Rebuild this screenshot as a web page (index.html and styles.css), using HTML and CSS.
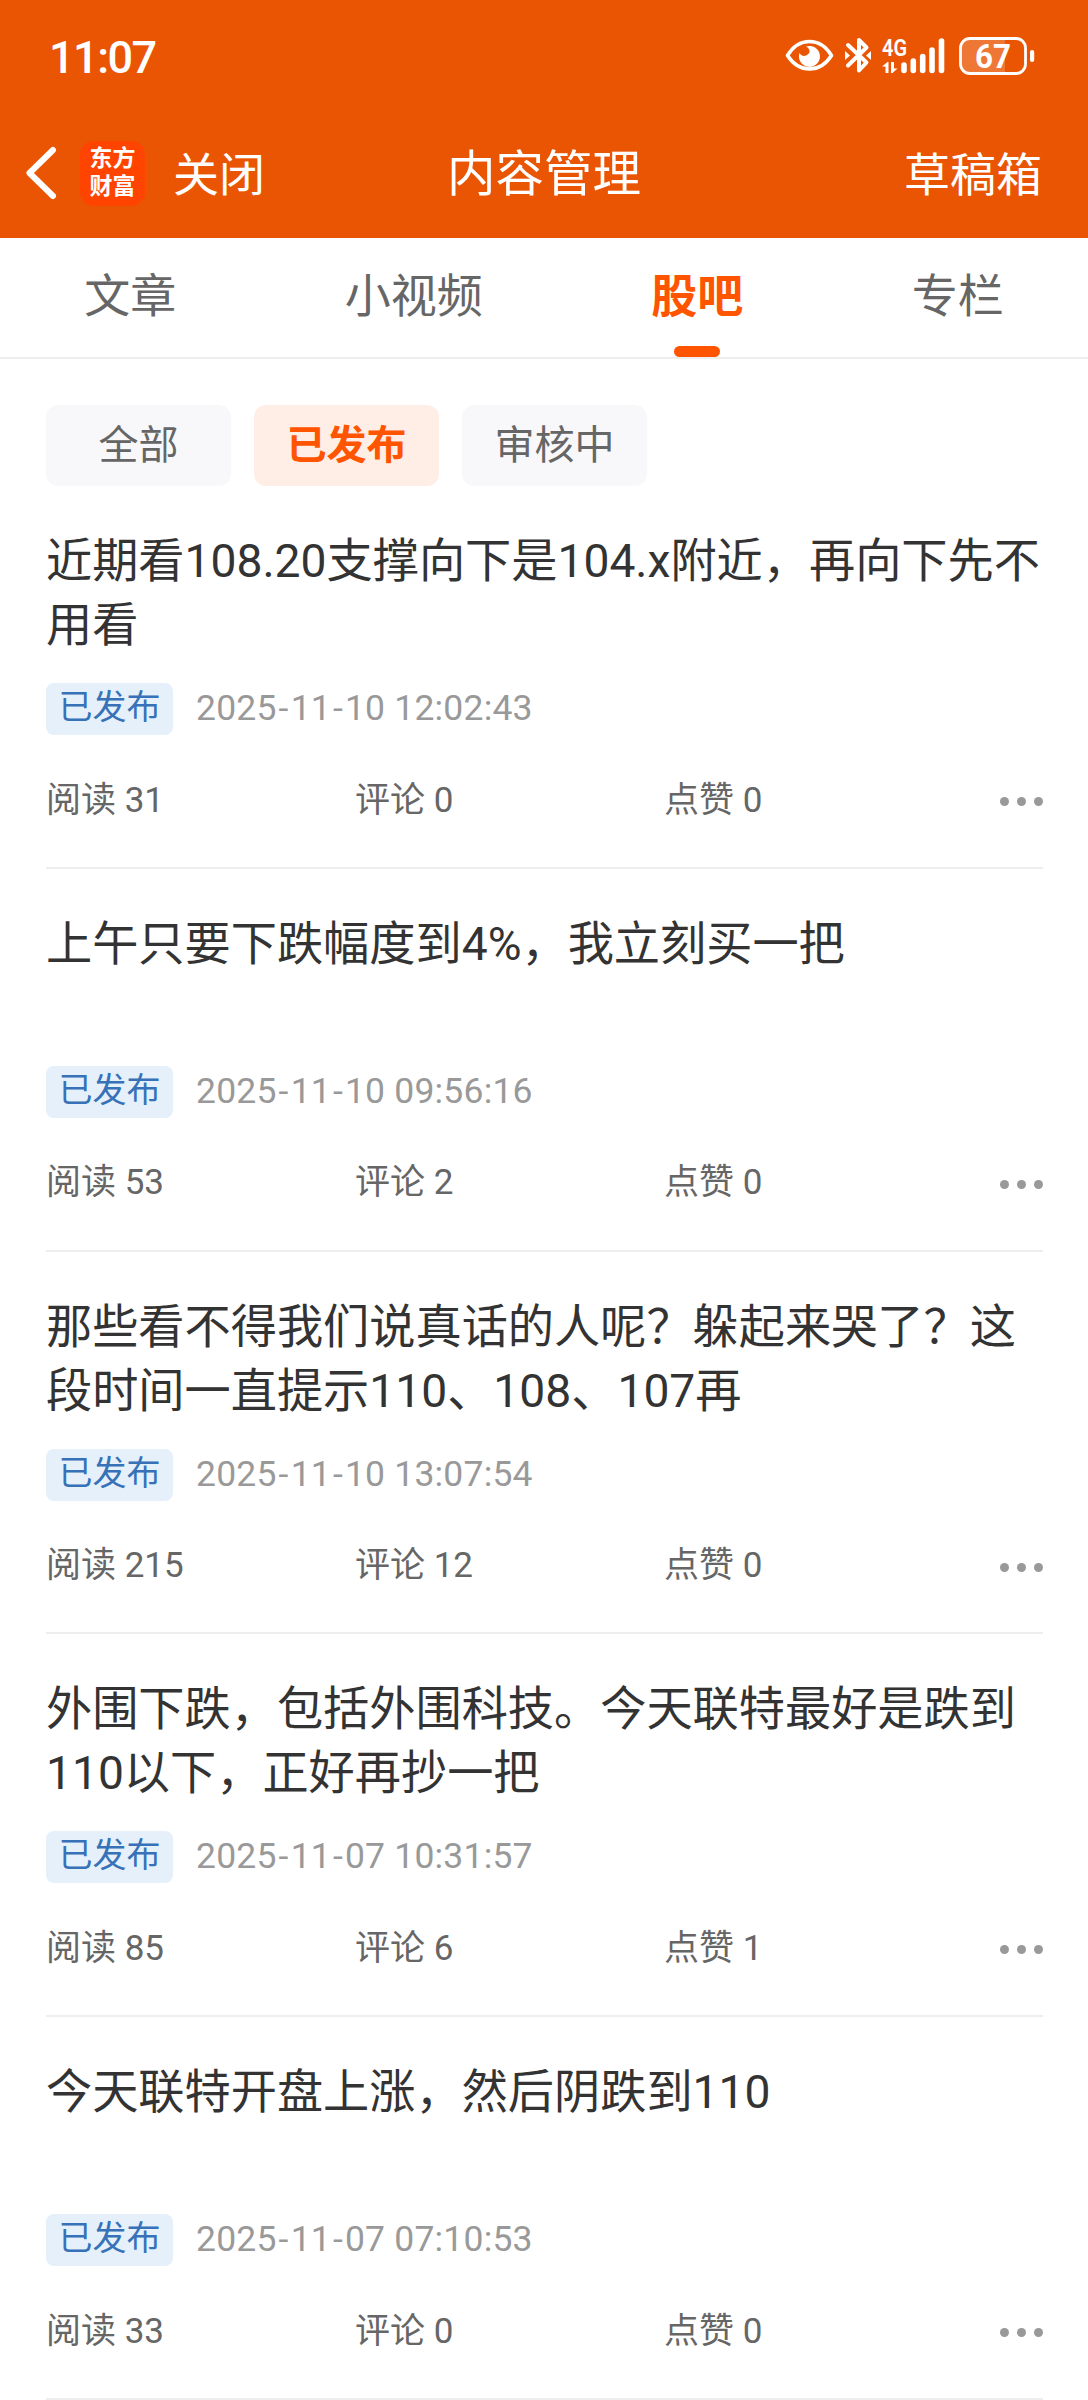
FILE: index.html
```html
<!DOCTYPE html>
<html lang="zh-CN">
<head>
    <meta charset="UTF-8">
    <meta name="viewport" content="width=device-width, initial-scale=1.0">
    <title>内容管理</title>
    <link rel="stylesheet" href="styles.css">
</head>
<body>
    <div class="top">
        <div class="status-bar">
            <span class="clock">11:07</span>
            <svg class="status-icons" width="252" height="42" viewBox="0 0 252 42">
                <!-- eye comfort -->
                <path d="M2.5 20.5C8 11.5 15.5 6.5 24.5 6.5S41 11.5 46.5 20.5C41 29 33.5 34 24.5 34S8 29 2.5 20.5Z" fill="none" stroke="#fff" stroke-width="3.6" stroke-linejoin="round"/>
                <path d="M21 11.5A10.5 10.5 0 1 1 14.5 18C16 20.5 18.5 21.5 21 20.5C25.5 19 26 14 21 11.5Z" fill="#fff"/>
                <!-- bluetooth -->
                <path d="M63 10L81.5 27.5L74 35.500V5L81.5 12.5L63 30.5" fill="none" stroke="#fff" stroke-width="4" stroke-linecap="round" stroke-linejoin="round"/>
                <path d="M60 16L65 20.5L60 25ZM86 16L81 20.5L86 25Z" fill="#fff"/>
                <!-- mobile signal -->
                <text class="net" x="97" y="21" textLength="25" lengthAdjust="spacingAndGlyphs">4G</text>
                <path d="M97 31.5L102.5 27H103.5V38H100.5V31.5ZM106 27H109V33.5H112.5L107.5 38H106Z" fill="#fff"/>
                <path d="M119 30V35.5M128.3 26V35.5M137.7 21.5V35.5M147 15V35.5M156.5 6V35.5" stroke="#fff" stroke-width="5.6" stroke-linecap="round"/>
                <!-- battery -->
                <path d="M220 3H184A10 10 0 0 0 175 12V29A10 10 0 0 0 184 38H220Z" fill="#fff" fill-opacity="0.2"/>
                <rect x="175.5" y="3.5" width="65" height="35" rx="9.5" fill="none" stroke="#fff" stroke-width="2.8"/>
                <rect x="245" y="15" width="4.2" height="12" rx="2.1" fill="#fff"/>
                <text class="level" x="190" y="33" textLength="36" lengthAdjust="spacingAndGlyphs">67</text>
            </svg>
        </div>
        <div class="nav">
            <div class="nav-left">
                <svg class="back" width="32" height="54" viewBox="0 0 32 54">
                    <path d="M28 4L4.5 27L28 50" fill="none" stroke="#fff" stroke-width="6" stroke-linecap="round" stroke-linejoin="round"/>
                </svg>
                <div class="logo"><span>东方</span><span>财富</span></div>
                <span class="close">关闭</span>
            </div>
            <h1>内容管理</h1>
            <span class="drafts">草稿箱</span>
        </div>
    </div>

    <div class="tabs">
        <div class="tab">文章</div>
        <div class="tab">小视频</div>
        <div class="tab active">股吧</div>
        <div class="tab">专栏</div>
    </div>

    <div class="filters">
        <div class="filter">全部</div>
        <div class="filter active">已发布</div>
        <div class="filter">审核中</div>
    </div>

    <div class="list">
        <div class="post">
            <div class="post-title">近期看108.20支撑向下是104.x附近，再向下先不用看</div>
            <div class="post-meta"><span class="badge">已发布</span><span class="date">2025<i>-</i>11<i>-</i>10 12:02:43</span></div>
            <div class="post-stats">
                <span>阅读 31</span><span>评论 0</span><span>点赞 0</span>
                <div class="more"><b></b><b></b><b></b></div>
            </div>
        </div>
        <div class="post">
            <div class="post-title">上午只要下跌幅度到4%，我立刻买一把</div>
            <div class="post-meta"><span class="badge">已发布</span><span class="date">2025<i>-</i>11<i>-</i>10 09:56:16</span></div>
            <div class="post-stats">
                <span>阅读 53</span><span>评论 2</span><span>点赞 0</span>
                <div class="more"><b></b><b></b><b></b></div>
            </div>
        </div>
        <div class="post">
            <div class="post-title">那些看不得我们说真话的人呢？躲起来哭了？这段时间一直提示110、108、107再</div>
            <div class="post-meta"><span class="badge">已发布</span><span class="date">2025<i>-</i>11<i>-</i>10 13:07:54</span></div>
            <div class="post-stats">
                <span>阅读 215</span><span>评论 12</span><span>点赞 0</span>
                <div class="more"><b></b><b></b><b></b></div>
            </div>
        </div>
        <div class="post">
            <div class="post-title">外围下跌，包括外围科技。今天联特最好是跌到110以下，正好再抄一把</div>
            <div class="post-meta"><span class="badge">已发布</span><span class="date">2025<i>-</i>11<i>-</i>07 10:31:57</span></div>
            <div class="post-stats">
                <span>阅读 85</span><span>评论 6</span><span>点赞 1</span>
                <div class="more"><b></b><b></b><b></b></div>
            </div>
        </div>
        <div class="post">
            <div class="post-title">今天联特开盘上涨，然后阴跌到110</div>
            <div class="post-meta"><span class="badge">已发布</span><span class="date">2025<i>-</i>11<i>-</i>07 07:10:53</span></div>
            <div class="post-stats">
                <span>阅读 33</span><span>评论 0</span><span>点赞 0</span>
                <div class="more"><b></b><b></b><b></b></div>
            </div>
        </div>
    </div>
</body>
</html>
```
FILE: styles.css
```css
* {
    margin: 0;
    padding: 0;
    box-sizing: border-box;
}

body {
    width: 1088px;
    height: 2400px;
    overflow: hidden;
    background: #fff;
    color: #333;
    font-family: Roboto, "Noto Sans CJK SC", sans-serif;
}

/* header */
.top {
    height: 238px;
    background: #ea5504;
    color: #fff;
}

.status-bar {
    display: flex;
    justify-content: space-between;
    height: 110px;
    padding: 35px 51px 0 49px;
}

.clock {
    font-size: 45px;
    font-weight: 500;
    line-height: 45px;
    letter-spacing: -1.5px;
}

.status-icons {
    display: block;
}

.net {
    font-size: 23px;
    font-weight: 600;
    fill: #fff;
}

.level {
    font-size: 33px;
    font-weight: 700;
    fill: #fff;
}

.nav {
    display: grid;
    grid-template-columns: 1fr auto 1fr;
    align-items: center;
    height: 126px;
    padding: 0 46px 0 25px;
    font-size: 46px;
    line-height: 64px;
}

.nav-left {
    display: flex;
    align-items: center;
}

.close,
.nav h1,
.drafts {
    padding-top: 3px;
}

.logo {
    display: flex;
    flex-direction: column;
    align-items: center;
    justify-content: center;
    width: 65px;
    height: 65px;
    margin: 0 28px 0 23px;
    border-radius: 14px;
    background: #ff4400;
    font-size: 23px;
    font-weight: 700;
    line-height: 28px;
}

.nav h1 {
    margin-left: 21px;
    font-size: 48.5px;
    font-weight: 400;
}

.drafts {
    justify-self: end;
}

/* tabs */
.tabs {
    display: flex;
    justify-content: space-around;
    height: 121px;
    border-bottom: 2px solid #eee;
}

.tab {
    display: flex;
    flex-direction: column;
    align-items: center;
    justify-content: space-between;
    padding-top: 26px;
    color: #666;
    font-size: 46px;
    line-height: 64px;
}

.tab.active {
    color: #ff5500;
    font-weight: 700;
}

.tab.active::after {
    content: "";
    width: 46px;
    height: 11px;
    border-radius: 6px;
    background: #ff5500;
}

/* filter chips */
.filters {
    display: flex;
    gap: 23px;
    padding: 46px 46px 0;
}

.filter {
    width: 185px;
    height: 81px;
    border-radius: 12px;
    background: #f8f8fb;
    color: #666;
    font-size: 40px;
    line-height: 81px;
    text-align: center;
}

.filter.active {
    background: #ffeee6;
    color: #ff5500;
    font-weight: 700;
}

/* posts */
.list {
    padding: 0 45px 0 46px;
}

.post {
    height: 382.75px;
    padding-top: 43px;
    border-bottom: 2px solid #eee;
}

.post-title {
    height: 128px;
    font-size: 46.2px;
    line-height: 64px;
}

.post-meta {
    display: flex;
    align-items: center;
    gap: 23px;
    height: 52px;
    margin-top: 26px;
    font-size: 34px;
}

.badge {
    width: 127px;
    height: 52px;
    border-radius: 8px;
    background: #e5f0fb;
    color: #3772b8;
    line-height: 48px;
    text-align: center;
}

.date {
    padding-bottom: 2px;
    color: #999;
    font-size: 35.5px;
    line-height: 48px;
    letter-spacing: 0.2px;
}

.date i {
    padding: 0 2px;
    font-style: normal;
}

.post-stats {
    display: flex;
    align-items: center;
    height: 50px;
    margin-top: 39px;
    color: #666;
    font-size: 35px;
    line-height: 50px;
}

.post-stats span {
    width: 309px;
    padding-top: 3px;
}

.more {
    display: flex;
    gap: 8px;
    margin: 5px 0 0 auto;
}

.more b {
    width: 9px;
    height: 9px;
    border-radius: 50%;
    background: #999;
}
```
